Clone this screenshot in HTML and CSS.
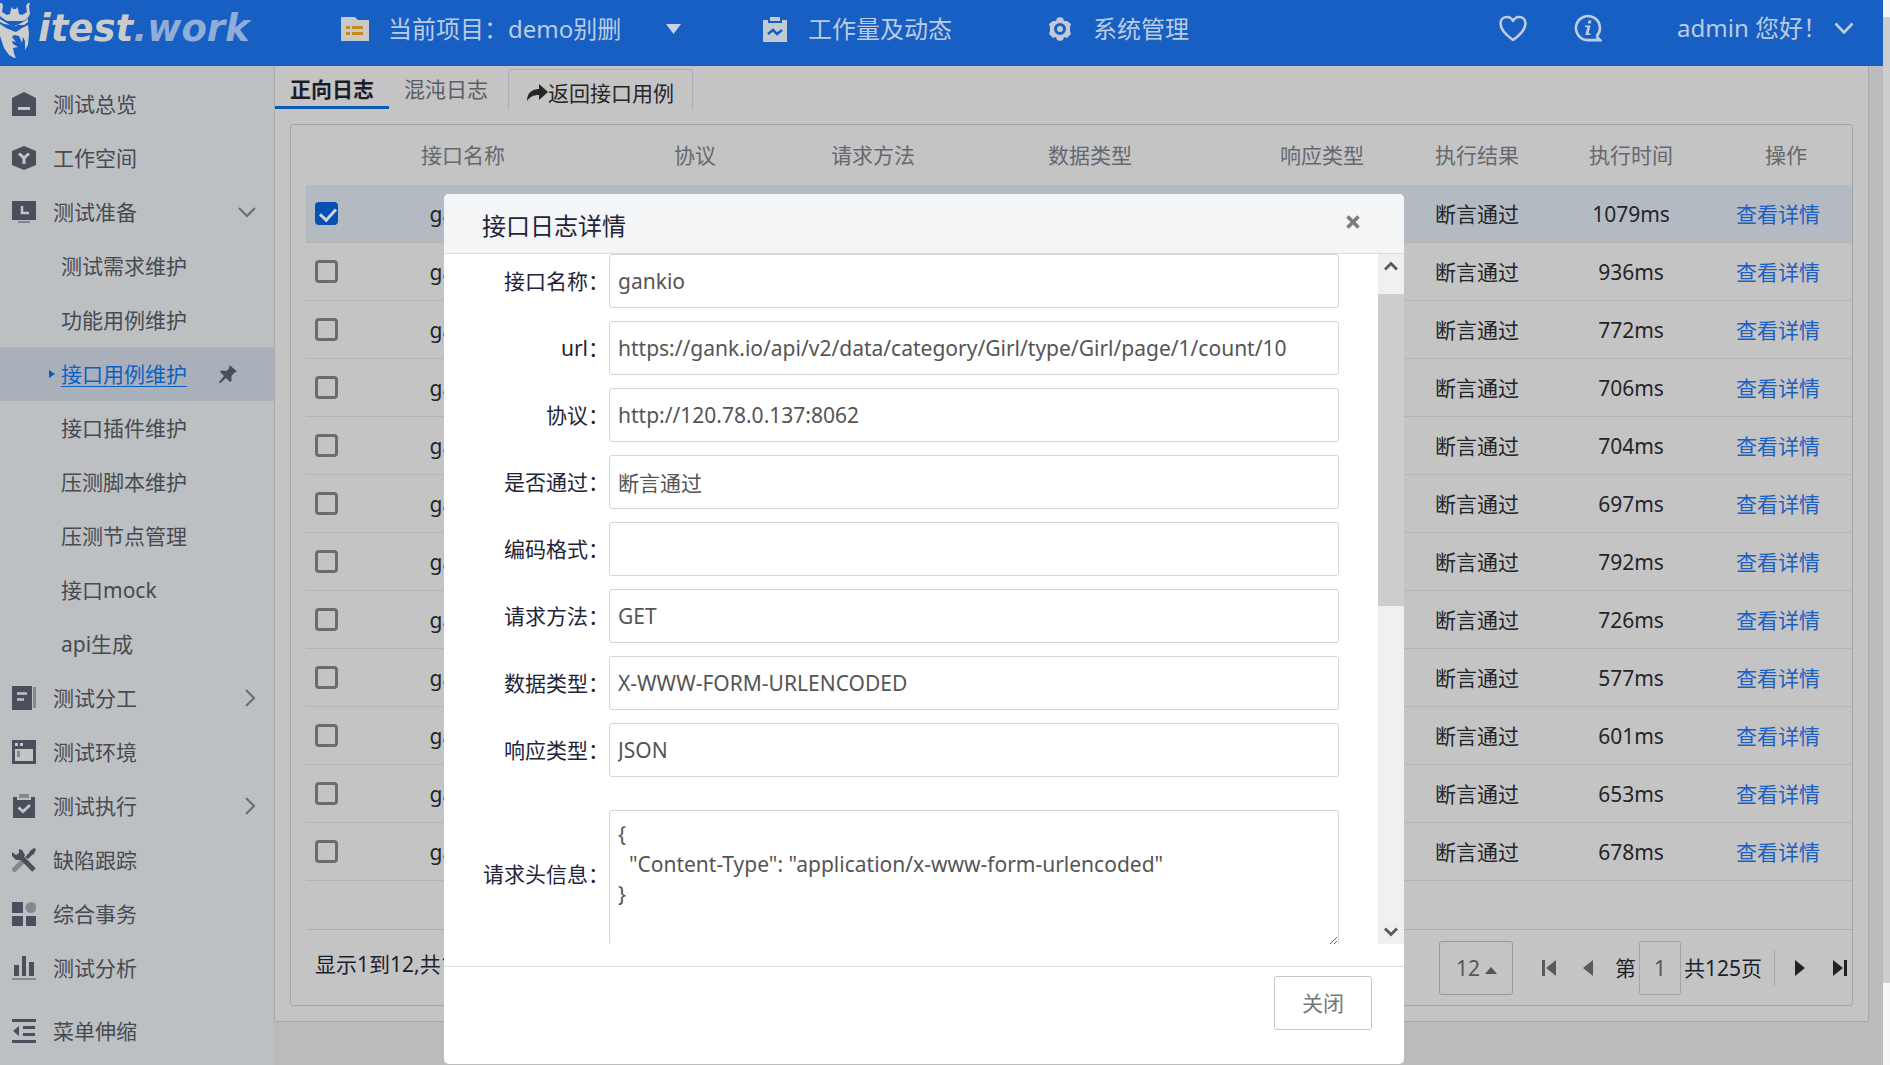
FILE: index.html
```html
<!DOCTYPE html>
<html lang="zh-CN">
<head>
<meta charset="utf-8">
<title>itest.work</title>
<link rel="stylesheet" href="styles.css">
</head>
<body>
<div class="window">
<div class="app">
  <header class="topbar">
    <a class="logo" href="#">
      <svg class="logo-mark" width="31" height="58" viewBox="0 0 31 58" fill="#cdcdcd"><path d="M0 3h2l1 3-1 6 5 3 3-1 1-5 1-2 1 2h3l1-2 1 2 1 5 3 1 5-3-1-6 2-3h2l-1 3 1 8-3 5-4 2H7l-6-4-1-1z"/><path d="M0 19l5 3 9 5 9-5 5-3v3l-4 3-8 0-2 2-3-2-7-1-4-2z"/><path d="M0 24l6 4 7 3 3 1 6-4 6-3 1 9-1 11-3 5 0-9-2-4-1 6-3-7-5-1-2 2 4 5-4-1 1 3 5 3-5 1 1 5 2 6-7-4-5-7-2-6-2-6z"/></svg>
      <span class="logo-text">itest<span class="logo-tail">.work</span></span>
    </a>
    <nav class="topnav">
      <a class="project" href="#">
        <svg width="28" height="24" viewBox="0 0 28 24"><path fill="#c9c9c9" d="M0 0h14l3 3h11v21H0z"/><path stroke="#c58b18" stroke-width="3" d="M5 10.500h4M11 10.500h11M5 16.500h4M11 16.500h11"/></svg>
        <span class="nav-label">当前项目：demo别删</span>
        <svg class="project-caret" width="15" height="10" viewBox="0 0 15 10"><path fill="#c9d3e3" d="M0 0h15L7.500 10z"/></svg>
      </a>
      <a class="workload" href="#">
        <svg width="24" height="25" viewBox="0 0 24 25"><path fill="#c3cad6" d="M0 3h5v3h14V3h5v22H0zM7 0h10v4H7z"/><path fill="none" stroke="#175fc2" stroke-width="2.500" d="M5 17l5-4 4 4 5-4"/></svg>
        <span class="nav-label">工作量及动态</span>
      </a>
      <a class="system" href="#">
        <svg width="24" height="24" viewBox="0 0 24 24"><path fill="#c3cad6" d="M9 1l3-1 3 1 1 3 3 0 4 3-1 3 0 4 1 3-4 4-3-1-1 3-3 1-3-1-1-3-3 1-4-4 1-3v-4L1 7l4-3 3 0z"/><circle cx="12" cy="12" r="4.500" fill="#c3cad6" stroke="#175fc2" stroke-width="3"/></svg>
        <span class="nav-label">系统管理</span>
      </a>
    </nav>
    <div class="usernav">
      <button type="button" class="icon-button" aria-label="收藏"><svg width="28" height="27" viewBox="0 0 28 27"><path fill="none" stroke="#bfcde2" stroke-width="2.600" stroke-linejoin="round" d="M14 25C7 20 1.500 15 1.500 8.500 1.500 4.500 4.500 2 8 2c3 0 5 2 6 4 1-2 3-4 6-4 3.500 0 6.500 2.500 6.500 6.500C26.500 15 21 20 14 25z"/></svg></button>
      <button type="button" class="icon-button" aria-label="帮助"><svg width="28" height="28" viewBox="0 0 28 28"><path fill="none" stroke="#bfcde2" stroke-width="2.600" d="M22.500 22.500a12 12 0 1 0-9 3.600H26l-3.500-3.600"/><path fill="#bfcde2" d="M14.500 6.500h3l-.7 3h-3zM11 11.500h5.500l-2 8h2v1.500h-5.200l2-8H11z"/></svg></button>
      <a class="user" href="#">admin 您好！
        <svg width="20" height="12" viewBox="0 0 20 12"><path fill="none" stroke="#bfcde2" stroke-width="2.600" d="M1.500 1.500l8.500 9 8.500-9"/></svg>
      </a>
    </div>
  </header>

  <div class="body">
    <nav class="sidebar">
      <a class="item" href="#"><svg class="ico" viewBox="0 0 24 24"><path d="M12 0l12 6v18H0V6z"/><path stroke="#c3c5c8" stroke-width="3" d="M6 16.500h12"/></svg>测试总览</a>
      <a class="item" href="#"><svg class="ico" viewBox="0 0 24 24"><path d="M12 0l12 5v14l-12 5-12-5V5z"/><path stroke="#c3c5c8" stroke-width="3" fill="none" d="M7 7.500l5 4.500 5-4.500M12 11v7"/></svg>工作空间</a>
      <a class="item" href="#"><svg class="ico" viewBox="0 0 24 24"><path d="M0 1h24v19H0z"/><path fill="#85888f" d="M6 21h12v2H6z"/><path stroke="#c3c5c8" stroke-width="2.500" fill="none" d="M10 6v7h7"/></svg>测试准备<svg class="chev" width="18" height="11" viewBox="0 0 18 11"><path d="M1 1l8 8 8-8"/></svg></a>
      <a class="item sub" href="#">测试需求维护</a>
      <a class="item sub" href="#">功能用例维护</a>
      <div class="item sub current"><svg class="marker" width="6" height="8" viewBox="0 0 6 8"><path d="M0 0l6 4-6 4z"/></svg><a class="current-link" href="#">接口用例维护</a><svg class="pin" width="18" height="18" viewBox="0 0 18 18"><path d="M10.500 0L18 6.500l-3 1.500-2.500 3 0 5-1.500 1-4-4-5.500 5L0 18l.5-1.500L5 11 1 7l1.500-1.500 5 .5L10 3.500z"/></svg></div>
      <a class="item sub" href="#">接口插件维护</a>
      <a class="item sub" href="#">压测脚本维护</a>
      <a class="item sub" href="#">压测节点管理</a>
      <a class="item sub" href="#">接口mock</a>
      <a class="item sub" href="#">api生成</a>
      <a class="item" href="#"><svg class="ico" viewBox="0 0 24 24"><path d="M0 0h20v24H0z"/><path fill="#85888f" d="M21 1h3v21h-3z"/><path stroke="#c3c5c8" stroke-width="2.500" d="M5 7.500h10M5 13.500h7"/></svg>测试分工<svg class="chev side" width="11" height="18" viewBox="0 0 11 18"><path d="M1 1l8 8-8 8"/></svg></a>
      <a class="item" href="#"><svg class="ico" viewBox="0 0 24 24"><path d="M0 0h24v24H0z"/><path fill="#c3c5c8" d="M3 9h18v12H3zM3 3h3v3H3zM8 3h3v3H8z"/><path fill="#85888f" d="M5 11h3v6H5z"/></svg>测试环境</a>
      <a class="item" href="#"><svg class="ico" viewBox="0 0 24 24"><path d="M1 3h22v21H1z"/><path fill="#bdc0c2" d="M5 0h14v6H5z"/><path fill="#85888f" d="M7 0h10v4H7z"/><path fill="none" stroke="#c3c5c8" stroke-width="2.800" d="M6.500 13.500l4.500 4 7-6.500"/></svg>测试执行<svg class="chev side" width="11" height="18" viewBox="0 0 11 18"><path d="M1 1l8 8-8 8"/></svg></a>
      <a class="item" href="#"><svg class="ico" viewBox="0 0 24 24"><path fill="none" stroke="#85888f" stroke-width="5" stroke-linecap="round" d="M2.500 21.500l7-7"/><path fill="none" stroke="#4a4f5e" stroke-width="5" d="M7 7l15 15"/><path d="M0 4l4 3 3-2V1l3 1 3 5-3 5-6 0-4-4zM13 9l4-4 1-2 4-3 2 1-2 5-2 1-4 4z"/></svg>缺陷跟踪</a>
      <a class="item" href="#"><svg class="ico" viewBox="0 0 24 24"><path d="M0 0h11v11H0zM0 14h11v10H0zM14 14h10v10H14z"/><circle cx="19" cy="5.500" r="5.500" fill="#85888f"/></svg>综合事务</a>
      <a class="item" href="#"><svg class="ico" viewBox="0 0 24 24"><path d="M2 9h5v11H2zM10 0h4v20h-4zM17 6h5v14h-5z"/><path fill="#85888f" d="M0 22h24v2H0z"/></svg>测试分析</a>
      <button type="button" class="item collapse"><svg class="ico" viewBox="0 0 24 24"><path d="M0 0h24v3H0zM0 21h24v3H0zM11 7h12v3H11zM11 14h12v3H11zM7 7v10l-6-5z"/></svg>菜单伸缩</button>
    </nav>

    <main class="panel">
      <div class="tabs">
        <a class="tab active" href="#">正向日志</a>
        <a class="tab" href="#">混沌日志</a>
        <a class="tab back" href="#"><svg width="21" height="17" viewBox="0 0 21 17"><path fill="#262626" d="M12 0l9 8-9 8v-5C6 11 3 13 0 17c0-8 5-12 12-12z"/></svg>返回接口用例</a>
      </div>
      <section class="grid">
        <table>
          <colgroup><col class="c-check"><col class="c-name"><col class="c-proto"><col class="c-method"><col class="c-data"><col class="c-resp"><col class="c-result"><col class="c-time"><col class="c-op"></colgroup>
          <thead><tr><th></th><th class="name">接口名称</th><th>协议</th><th>请求方法</th><th>数据类型</th><th>响应类型</th><th>执行结果</th><th>执行时间</th><th>操作</th></tr></thead>
          <tbody>
            <tr class="selected"><td><input type="checkbox" aria-label="选择第1行" checked></td><td class="name">gankio</td><td></td><td></td><td></td><td></td><td>断言通过</td><td>1079ms</td><td class="op"><a href="#">查看详情</a></td></tr>
            <tr><td><input type="checkbox" aria-label="选择第2行"></td><td class="name">gankio</td><td></td><td></td><td></td><td></td><td>断言通过</td><td>936ms</td><td class="op"><a href="#">查看详情</a></td></tr>
            <tr><td><input type="checkbox" aria-label="选择第3行"></td><td class="name">gankio</td><td></td><td></td><td></td><td></td><td>断言通过</td><td>772ms</td><td class="op"><a href="#">查看详情</a></td></tr>
            <tr><td><input type="checkbox" aria-label="选择第4行"></td><td class="name">gankio</td><td></td><td></td><td></td><td></td><td>断言通过</td><td>706ms</td><td class="op"><a href="#">查看详情</a></td></tr>
            <tr><td><input type="checkbox" aria-label="选择第5行"></td><td class="name">gankio</td><td></td><td></td><td></td><td></td><td>断言通过</td><td>704ms</td><td class="op"><a href="#">查看详情</a></td></tr>
            <tr><td><input type="checkbox" aria-label="选择第6行"></td><td class="name">gankio</td><td></td><td></td><td></td><td></td><td>断言通过</td><td>697ms</td><td class="op"><a href="#">查看详情</a></td></tr>
            <tr><td><input type="checkbox" aria-label="选择第7行"></td><td class="name">gankio</td><td></td><td></td><td></td><td></td><td>断言通过</td><td>792ms</td><td class="op"><a href="#">查看详情</a></td></tr>
            <tr><td><input type="checkbox" aria-label="选择第8行"></td><td class="name">gankio</td><td></td><td></td><td></td><td></td><td>断言通过</td><td>726ms</td><td class="op"><a href="#">查看详情</a></td></tr>
            <tr><td><input type="checkbox" aria-label="选择第9行"></td><td class="name">gankio</td><td></td><td></td><td></td><td></td><td>断言通过</td><td>577ms</td><td class="op"><a href="#">查看详情</a></td></tr>
            <tr><td><input type="checkbox" aria-label="选择第10行"></td><td class="name">gankio</td><td></td><td></td><td></td><td></td><td>断言通过</td><td>601ms</td><td class="op"><a href="#">查看详情</a></td></tr>
            <tr><td><input type="checkbox" aria-label="选择第11行"></td><td class="name">gankio</td><td></td><td></td><td></td><td></td><td>断言通过</td><td>653ms</td><td class="op"><a href="#">查看详情</a></td></tr>
            <tr><td><input type="checkbox" aria-label="选择第12行"></td><td class="name">gankio</td><td></td><td></td><td></td><td></td><td>断言通过</td><td>678ms</td><td class="op"><a href="#">查看详情</a></td></tr>
          </tbody>
        </table>
        <div class="pager">
          <span class="summary">显示1到12,共1</span>
          <span class="size"><select aria-label="每页条数"><option>12</option></select><svg class="size-caret" width="12" height="7" viewBox="0 0 12 7"><path fill="#555" d="M0 7h12L6 0z"/></svg></span>
          <button type="button" class="first" aria-label="首页"><svg width="14" height="16" viewBox="0 0 14 16"><path fill="#5a5a5a" d="M0 0h3v16H0zM14 0v16L4 8z"/></svg></button>
          <button type="button" class="prev" aria-label="上一页"><svg width="10" height="16" viewBox="0 0 10 16"><path fill="#5a5a5a" d="M10 0v16L0 8z"/></svg></button>
          <label class="page">第<input type="text" value="1">共125页</label>
          <button type="button" class="next" aria-label="下一页"><svg width="10" height="16" viewBox="0 0 10 16"><path fill="#222" d="M0 0v16l10-8z"/></svg></button>
          <button type="button" class="last" aria-label="末页"><svg width="14" height="16" viewBox="0 0 14 16"><path fill="#222" d="M0 0v16l10-8zM11 0h3v16h-3z"/></svg></button>
        </div>
      </section>
    </main>
  </div>
</div>
<div class="page-scroll" aria-hidden="true"><div class="page-thumb"></div></div>
</div>

<div class="modal" role="dialog" aria-labelledby="modal-title">
  <div class="modal-head">
    <h2 id="modal-title">接口日志详情</h2>
    <button type="button" class="close" aria-label="关闭窗口"><svg width="14" height="14" viewBox="0 0 14 14"><path stroke="#7d7d7d" stroke-width="3.600" d="M1.500 1.500l11 11M12.500 1.500l-11 11"/></svg></button>
  </div>
  <div class="modal-body">
    <form class="fields">
      <label for="f-name">接口名称：</label><input id="f-name" type="text" value="gankio">
      <label for="f-url">url：</label><input id="f-url" type="text" value="https://gank.io/api/v2/data/category/Girl/type/Girl/page/1/count/10">
      <label for="f-proto">协议：</label><input id="f-proto" type="text" value="http://120.78.0.137:8062">
      <label for="f-pass">是否通过：</label><input id="f-pass" type="text" value="断言通过">
      <label for="f-enc">编码格式：</label><input id="f-enc" type="text" value="">
      <label for="f-method">请求方法：</label><input id="f-method" type="text" value="GET">
      <label for="f-data">数据类型：</label><input id="f-data" type="text" value="X-WWW-FORM-URLENCODED">
      <label for="f-resp">响应类型：</label><input id="f-resp" type="text" value="JSON">
      <label for="f-head" class="tall">请求头信息：</label><textarea id="f-head" class="tall">{
  "Content-Type": "application/x-www-form-urlencoded"
}</textarea>
    </form>
    <div class="scroll" aria-hidden="true">
      <svg width="14" height="10" viewBox="0 0 14 10"><path fill="none" stroke="#5c5c5c" stroke-width="3" d="M1 8.500l6-6 6 6"/></svg>
      <div class="thumb"></div>
      <svg class="down" width="14" height="10" viewBox="0 0 14 10"><path fill="none" stroke="#5c5c5c" stroke-width="3" d="M1 1.500l6 6 6-6"/></svg>
    </div>
  </div>
  <div class="modal-foot"><button type="button" class="dismiss">关闭</button></div>
</div>
</body>
</html>
```
FILE: styles.css
```css
* { box-sizing: border-box; }

body {
  margin: 0;
  background: #bbbbbb;
  color: #23252b;
  font: 21px/30px "Noto Sans", "Noto Sans CJK SC", sans-serif;
}

a { color: inherit; text-decoration: none; }

button, input, select, textarea { font: inherit; color: inherit; }

button { padding: 0; border: 0; background: none; display: flex; align-items: center; }

svg { flex: none; display: block; }

.window { display: flex; min-height: 100vh; overflow: hidden; }
.app { flex: 1; display: flex; flex-direction: column; }
.page-scroll { width: 7px; padding-top: 17px; background: #f8f8f8; }
.page-thumb { height: 966px; background: #cdcdcd; }

/* top bar */
.topbar {
  height: 66px;
  display: flex;
  align-items: flex-start;
  background: #175fc2;
  color: #bccbe3;
  font-size: 24px;
  line-height: 34px;
}
.logo { width: 341px; display: flex; align-items: center; gap: 7px; }
.logo-text {
  font: italic bold 37px/52px "DejaVu Sans", sans-serif;
  color: #cbcbcb;
}
.logo-tail { color: #8fadd8; }
.topnav { flex: 1; display: flex; padding-top: 12px; }
.topnav a { display: flex; align-items: center; }
.project { gap: 19px; width: 422px; }
.project-caret { margin-left: 26px; }
.workload { gap: 21px; width: 285px; }
.system { gap: 21px; }
.usernav { display: flex; align-items: center; padding: 11px 29px 0 0; }
.icon-button { margin-right: 47px; }
.user { display: flex; align-items: center; gap: 7px; margin-left: 28px; }

.body { flex: 1; display: flex; align-items: flex-start; }

/* side menu */
.sidebar {
  width: 274px;
  align-self: stretch;
  padding-top: 11px;
  background: #bdc0c2;
  color: #474a51;
}
.item { display: flex; align-items: center; height: 54px; padding: 0 18px 0 12px; }
.sub { padding-left: 61px; }
.ico { width: 24px; height: 24px; margin-right: 17px; fill: #4a4f5e; }
.chev { margin-left: auto; fill: none; stroke: #686c73; stroke-width: 2; }
.current { padding-left: 49px; background: #a9b0ba; }
.current-link { color: #0b62c4; text-decoration: underline; text-decoration-thickness: 1px; text-underline-offset: 4px; }
.marker { margin-right: 6px; fill: #0b5cb8; }
.pin { margin-left: 32px; fill: #4a4f5e; }
.collapse { width: 100%; margin-top: 9px; }

/* log list */
.panel {
  flex: 1;
  margin-right: 14px;
  padding: 0 15px 15px;
  border: 1px solid #a8a9ab;
  border-top: 0;
  background: #c4c4c4;
}
.tabs { display: flex; align-items: flex-end; height: 43px; margin-left: -15px; color: #5b5e66; }
.tab { height: 43px; padding: 8px 15px 0; }
.active { color: #1a1d28; font-weight: bold; border-bottom: 3px solid #0b5bb5; }
.back {
  height: 40px;
  display: flex;
  align-items: center;
  margin-left: 5px;
  padding: 6px 18px 0;
  border: 1px solid #adaeb1;
  border-bottom: 0;
  border-radius: 3px 3px 0 0;
  color: #262626;
}
.grid { margin-top: 15px; padding-left: 15px; border: 1px solid #a5a6a9; border-radius: 3px; }

table { width: 100%; table-layout: fixed; border-collapse: separate; border-spacing: 0; margin-bottom: 48px; }
.c-check { width: 48px; }
.c-name { width: 238px; }
.c-proto { width: 206px; }
.c-method { width: 150px; }
.c-data { width: 284px; }
.c-resp { width: 180px; }
.c-result { width: 130px; }
.c-time { width: 178px; }
.c-op { width: 132px; }
th { height: 60px; padding: 0; font-weight: normal; color: #65686f; }
td { height: 58px; padding: 0; text-align: center; border-bottom: 1px solid #b3b4b6; }
.name { padding-right: 20px; }
.op { padding-right: 16px; color: #1d5fc0; }
.selected td { background: #b4bac2; }

input[type="checkbox"] {
  appearance: none;
  display: block;
  width: 23px;
  height: 23px;
  margin: 0 0 0 9px;
  border: 3px solid #6c6c6c;
  border-radius: 4px;
}
input[type="checkbox"]:checked { border-color: #074fb3; background: #074fb3; }
input[type="checkbox"]:checked::before {
  content: "";
  display: block;
  width: 7px;
  height: 13px;
  margin: 0 0 0 5px;
  border: solid #d0d4da;
  border-width: 0 3px 3px 0;
  transform: rotate(42deg);
}

.pager { display: flex; align-items: center; height: 76px; padding: 0 5px 0 9px; border-top: 1px solid #afb0b3; color: #1b1f2c; }
.summary { margin-right: auto; padding-bottom: 8px; }
.size { position: relative; color: #555; }
.size select { appearance: none; width: 74px; height: 54px; padding: 0 0 0 16px; border: 1px solid #9a9a9a; border-radius: 3px; background: none; display: block; }
.size-caret { position: absolute; right: 16px; top: 26px; }
.first { margin-left: 29px; }
.prev { margin-left: 27px; }
.page { display: flex; align-items: center; margin-left: 22px; }
.page input { width: 42px; height: 54px; margin: 0 3px; padding: 0; text-align: center; color: #555; border: 1px solid #a5a5a5; border-radius: 3px; background: none; }
.next { height: 36px; margin-left: 12px; padding-left: 20px; border-left: 1px solid #a5a6a9; }
.last { margin-left: 28px; }

/* detail dialog */
.modal {
  position: absolute;
  left: 444px;
  top: 194px;
  width: 960px;
  border-radius: 5px;
  overflow: hidden;
  background: #ffffff;
  color: #1f2438;
}
.modal-head {
  display: flex;
  justify-content: space-between;
  align-items: center;
  height: 60px;
  padding: 5px 44px 0 38px;
  border-bottom: 1px solid #dadcde;
  background: #f3f5f7;
}
.modal-head h2 { margin: 0; font-size: 24px; line-height: 34px; font-weight: normal; }
.close { margin-bottom: 9px; }
.modal-body { display: flex; height: 690px; overflow: hidden; }
.fields {
  flex: 1;
  display: grid;
  grid-template-columns: 165px 1fr;
  align-content: start;
  align-items: center;
  row-gap: 13px;
  padding-right: 39px;
}
.fields label { text-align: right; }
.fields input, .fields textarea {
  width: 100%;
  height: 54px;
  padding: 0 8px;
  border: 1px solid #d3d5d7;
  border-radius: 3px;
  background: #ffffff;
  color: #555555;
  outline: 0;
}
.fields textarea { display: block; height: 136px; padding: 8px; resize: vertical; overflow: hidden; }
.fields .tall { margin-top: 20px; }
.fields label.tall { padding-bottom: 8px; }
.scroll {
  width: 26px;
  display: flex;
  flex-direction: column;
  align-items: center;
  padding: 7px 0;
  background: #f0f0f0;
}
.thumb { width: 100%; height: 312px; margin-top: 23px; background: #cdcdcd; }
.down { margin-top: auto; }
.modal-foot {
  display: flex;
  justify-content: flex-end;
  margin-top: 22px;
  padding: 9px 32px 34px;
  border-top: 1px solid #dadcde;
}
.dismiss { width: 98px; height: 54px; justify-content: center; border: 1px solid #c6c6c6; border-radius: 3px; color: #777777; }
```
